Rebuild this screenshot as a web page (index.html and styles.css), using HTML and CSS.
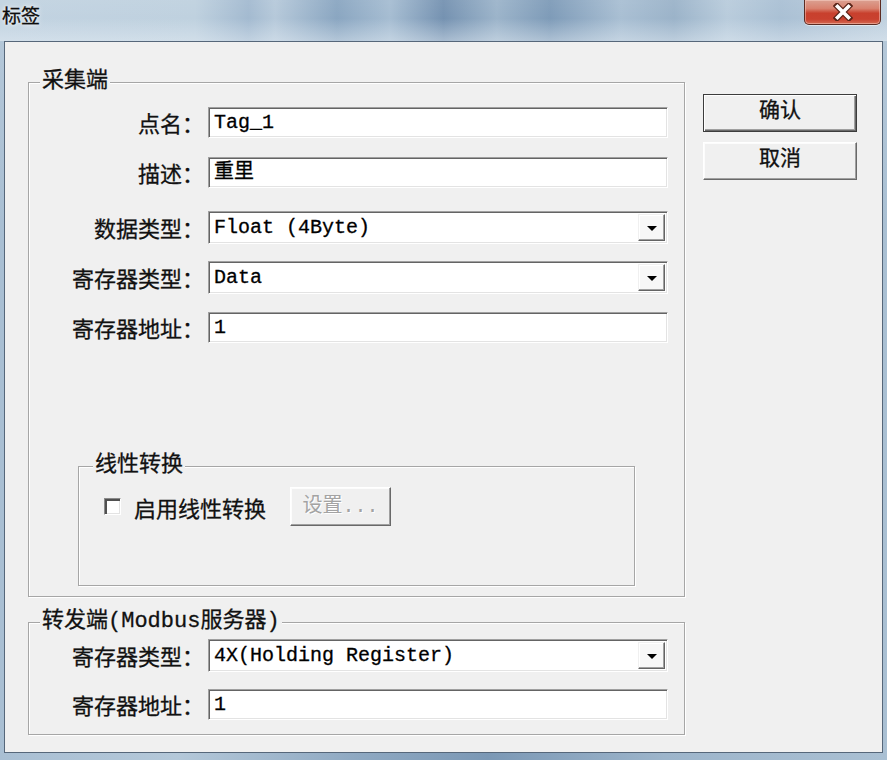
FILE: index.html
```html
<!DOCTYPE html>
<html lang="zh-CN">
<head>
<meta charset="utf-8">
<title>标签</title>
<link rel="stylesheet" href="styles.css">
</head>
<body>
<div class="window">
  <div class="titlebar">
    <span class="title">标签</span>
    <span class="close">
      <svg width="20" height="18" viewBox="0 0 20 18">
        <path d="M4 3 L16 15 M16 3 L4 15" stroke="#5a2418" stroke-width="6" stroke-linecap="square" fill="none"/>
        <path d="M4.5 3.5 L15.5 14.5 M15.5 3.5 L4.5 14.5" stroke="#ffffff" stroke-width="3.6" stroke-linecap="square" fill="none"/>
      </svg>
    </span>
  </div>
  <div class="client">
    <div class="main-col">
      <fieldset class="group group-collect">
        <legend class="legend">采集端</legend>
        <div class="rows">
          <div class="row">
            <span class="label">点名：</span>
            <div class="field"><span class="value">Tag_1</span></div>
          </div>
          <div class="row">
            <span class="label">描述：</span>
            <div class="field"><span class="value">重里</span></div>
          </div>
          <div class="row row-wide">
            <span class="label">数据类型：</span>
            <div class="field combo"><span class="value">Float (4Byte)</span><span class="drop"><span class="tri"></span></span></div>
          </div>
          <div class="row">
            <span class="label">寄存器类型：</span>
            <div class="field combo"><span class="value">Data</span><span class="drop"><span class="tri"></span></span></div>
          </div>
          <div class="row">
            <span class="label">寄存器地址：</span>
            <div class="field"><span class="value">1</span></div>
          </div>
        </div>
        <fieldset class="group group-linear">
          <legend class="legend legend-linear">线性转换</legend>
          <div class="linear-row">
            <span class="check"></span>
            <span class="check-label">启用线性转换</span>
            <span class="btn btn-disabled">设置...</span>
          </div>
        </fieldset>
      </fieldset>
      <fieldset class="group group-forward">
        <legend class="legend">转发端(Modbus服务器)</legend>
        <div class="rows rows-forward">
          <div class="row">
            <span class="label">寄存器类型：</span>
            <div class="field combo"><span class="value">4X(Holding Register)</span><span class="drop"><span class="tri"></span></span></div>
          </div>
          <div class="row">
            <span class="label">寄存器地址：</span>
            <div class="field"><span class="value">1</span></div>
          </div>
        </div>
      </fieldset>
    </div>
    <div class="side-col">
      <span class="btn btn-default">确认</span>
      <span class="btn">取消</span>
    </div>
  </div>
</div>
</body>
</html>
```
FILE: styles.css
```css
* { box-sizing: border-box; }
html, body { margin: 0; padding: 0; }
body {
  width: 887px;
  height: 760px;
  overflow: hidden;
  font-family: "Liberation Mono", "Noto Sans CJK SC", monospace;
  color: #111;
}
.window {
  width: 887px;
  height: 760px;
  display: flex;
  flex-direction: column;
  background:
    linear-gradient(180deg, rgba(255,255,255,0.15), rgba(255,255,255,0) 30%),
    linear-gradient(90deg, #a9bfd3 0%, #b4c8d9 20%, #8fa9c2 40%, #7b98b5 55%, #9db5cb 75%, #aac0d3 100%);
}
.titlebar {
  height: 41px;
  flex: none;
  display: flex;
  justify-content: space-between;
  align-items: flex-start;
  padding: 0 6px 0 2px;
  background:
    linear-gradient(180deg, rgba(255,255,255,0.05) 0%, rgba(255,255,255,0) 45%, rgba(230,238,245,0.45) 100%),
    linear-gradient(90deg, #c2d3e1 0%, #bfd1df 22%, #a3bad0 28%, #b6c9da 31%, #8aa6c1 38%, #a6bdd2 44%, #7592b1 50%, #9cb4ca 56%, #7e9bb8 62%, #a9bfd3 70%, #9bb3c9 76%, #b9ccdc 82%, #aac0d4 88%, #c0d1df 100%);
}
.title {
  font-family: "Noto Sans CJK SC", sans-serif;
  font-size: 19px;
  line-height: 24px;
  margin-top: 3px;
  color: #0d0d0d;
  -webkit-text-stroke: 0.3px #0d0d0d;
  text-shadow: 0 0 6px rgba(255,255,255,0.9), 0 0 3px rgba(255,255,255,0.9);
}
.close {
  width: 77px;
  height: 25px;
  border: 1px solid #5b2b22;
  border-top: none;
  border-radius: 0 0 5px 5px;
  background: linear-gradient(180deg, #dba091 0%, #d9826f 35%, #c8402d 55%, #c9412f 80%, #d46a52 100%);
  box-shadow: inset 0 0 0 1px rgba(255,220,210,0.45), 0 1px 0 rgba(255,255,255,0.5);
  display: flex;
  align-items: center;
  justify-content: center;
}
.client {
  flex: 1;
  margin: 0 4px 7px 4px;
  border: 1px solid #56677a;
  background: #f0f0f0;
  display: flex;
  align-items: flex-start;
}
.main-col {
  margin: 28px 0 0 23px;
  display: flex;
  flex-direction: column;
}
.group {
  margin: 0;
  padding: 0;
  min-inline-size: 0;
  border: 1px solid #a6a6a6;
  box-shadow: 1px 1px 0 #ffffff, inset 1px 1px 0 #ffffff;
}
.legend {
  font-size: 22px;
  line-height: 24px;
  padding: 0 2px;
  margin-left: 11px;
  color: #111;
  -webkit-text-stroke: 0.3px #111;
  background: #f0f0f0;
}
.group-collect {
  width: 657px;
  height: 527px;
}
.rows {
  display: flex;
  flex-direction: column;
  gap: 18px;
  padding-top: 12px;
}
.row {
  height: 32px;
  display: flex;
  align-items: center;
}
.row-wide { margin-top: 5px; }
.label {
  width: 175px;
  text-align: right;
  font-family: "Noto Sans CJK SC", sans-serif;
  font-size: 22px;
  line-height: 24px;
  color: #111;
  -webkit-text-stroke: 0.3px #111;
}
.field {
  width: 460px;
  height: 31px;
  margin-left: 4px;
  background: #ffffff;
  border: 1px solid;
  border-color: #a0a0a0 #ffffff #ffffff #a0a0a0;
  box-shadow: inset 1px 1px 0 #646464, inset -1px -1px 0 #e3e3e3;
  display: flex;
  align-items: center;
  padding-left: 5px;
}
.combo {
  height: 33px;
  padding-right: 2px;
}
.value {
  flex: 1;
  font-size: 20px;
  line-height: 24px;
  margin-top: 1px;
  color: #000;
  -webkit-text-stroke: 0.3px #000;
  white-space: pre;
}
.drop {
  width: 27px;
  height: 27px;
  margin-top: 1px;
  background: #f7f7f7;
  border: 1px solid;
  border-color: #f0f0f0 #646464 #646464 #f0f0f0;
  box-shadow: inset -1px -1px 0 #a0a0a0, inset 1px 1px 0 #ffffff;
  display: flex;
  align-items: center;
  justify-content: center;
}
.tri {
  width: 0;
  height: 0;
  border-left: 5px solid transparent;
  border-right: 5px solid transparent;
  border-top: 5px solid #000;
  margin-top: 2px;
}
.group-linear {
  width: 557px;
  height: 132px;
  margin: 111px 0 0 49px;
}
.legend-linear { margin-left: 14px; }
.linear-row {
  display: flex;
  align-items: center;
  height: 39px;
  margin-top: 9px;
}
.check {
  width: 17px;
  height: 17px;
  margin-left: 25px;
  background: #ffffff;
  border: 1px solid;
  border-color: #8a8a8a #ffffff #ffffff #8a8a8a;
  box-shadow: inset 2px 2px 0 #505050, inset -1px -1px 0 #e3e3e3;
}
.check-label {
  margin-left: 13px;
  font-family: "Noto Sans CJK SC", sans-serif;
  font-size: 22px;
  line-height: 24px;
  -webkit-text-stroke: 0.3px #111;
}
.btn {
  display: flex;
  align-items: center;
  justify-content: center;
  font-size: 21px;
  line-height: 24px;
  background: #f0f0f0;
  border: 1px solid;
  border-color: #ffffff #696969 #696969 #ffffff;
  box-shadow: inset -1px -1px 0 #a0a0a0, inset 1px 1px 0 #fcfcfc;
  color: #111;
  -webkit-text-stroke: 0.3px #111;
}
.btn-disabled {
  width: 101px;
  height: 39px;
  margin-left: 24px;
  color: #a3a3a3;
  -webkit-text-stroke: 0;
  text-shadow: 1px 1px 0 #ffffff;
  font-size: 20px;
}
.side-col {
  margin: 52px 0 0 18px;
  display: flex;
  flex-direction: column;
  gap: 10px;
}
.side-col .btn {
  width: 154px;
  height: 38px;
  padding-bottom: 3px;
}
.btn-default {
  border-color: #3c3c3c;
  box-shadow: inset 1px 1px 0 #ffffff, inset -1px -1px 0 #696969, inset -2px -2px 0 #a0a0a0;
}
.group-forward {
  width: 657px;
  height: 125px;
  margin-top: 13px;
}
.rows-forward {
  padding-top: 5px;
  gap: 17px;
}
```
